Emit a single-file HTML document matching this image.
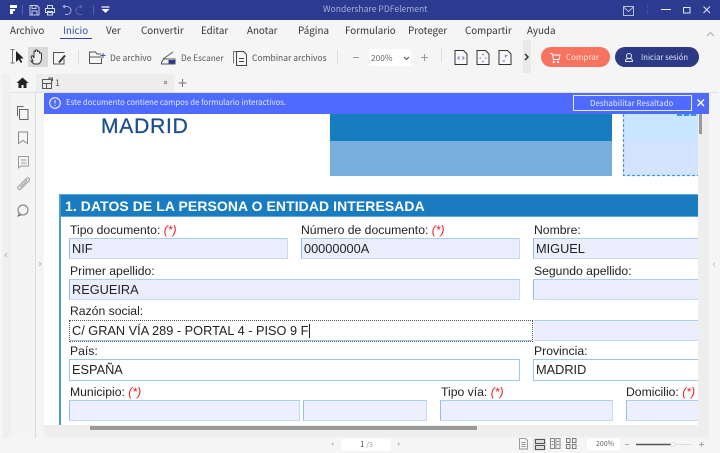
<!DOCTYPE html>
<html><head><meta charset="utf-8">
<style>
html,body{margin:0;padding:0;width:720px;height:453px;overflow:hidden;background:#f5f5f5}
#r{position:relative;width:720px;height:453px;overflow:hidden;font-family:"Noto Sans CJK SC","Liberation Sans",sans-serif}
#r div,#r span.a,#r svg{position:absolute}
.t{white-space:nowrap;line-height:1;color:#333}
.m{font-size:9.8px;top:25.5px;color:#333}
.tb{font-size:8.5px;color:#555;top:54px}
.l{font-family:"Liberation Sans",sans-serif;font-size:12.2px;color:#222;white-space:nowrap;line-height:1}
.l i{color:#f01c24}
.f{box-sizing:border-box;background:#ebedfd;border:1px solid #c5dcf3;border-left-color:#8fc0e6;border-top-color:#a9cfee;font-family:"Liberation Sans",sans-serif;font-size:12.75px;color:#222;white-space:nowrap;line-height:19px;padding-left:2px}
.w{background:#fff;border-color:#9cc8ea}
svg{overflow:visible}
</style></head><body><div id="r">

<!-- title bar -->
<div style="left:0;top:0;width:720px;height:20px;background:#2c3a90"></div>
<svg style="left:0;top:0" width="720" height="20" fill="none" stroke="#dfe2f2" stroke-width="1">
<path d="M10 5h7v3h-7zM10 9h5v2h-2v3h-3z" fill="#fff" stroke="none"/>
<path d="M22.500 5v10" stroke="#5560a8"/>
<path d="M30 5.500h7l2 2v7.500h-9zM32 5.500v3h4v-3M32 15v-4h5v4" stroke="#c8cce6"/>
<path d="M47.500 8.500v-3h5v3M45.500 8.500h9v4h-9zM47.500 11.500h5v3.500h-5z" stroke="#d5d8ec"/>
<path d="M63 6.500h4a3.800 3.800 0 0 1 0 8h-2M63 6.500l2-1.500M63 6.500l2 1.500" stroke="#aab0d6"/>
<path d="M82 6.500h-2a4 4 0 0 0 0 8h2M82 6.500l-2-1.500M82 6.500l-2 1.500" stroke="#5b66ac"/>
<path d="M93.500 5v10" stroke="#5560a8"/>
<path d="M101.500 7h8" stroke="#fff" stroke-width="1.200"/>
<path d="M101.500 9h8l-4 4z" fill="#fff" stroke="none"/>
<path d="M623.500 6.500h10v9h-10zM623.500 7l5 4.500 5-4.500" stroke="#b7bcdd"/>
<path d="M647.500 5v10" stroke="#5560a8" stroke-dasharray="1 1"/>
<path d="M661 9.500h10" stroke="#eef"/>
<path d="M683.500 7.500h6.500v5.500h-6.500z" stroke="#e4e6f4"/>
<path d="M703.500 6.500l6.500 6.500M710 6.500l-6.500 6.500" stroke="#e4e6f4"/>
</svg>
<div class="t" style="left:323px;top:5px;font-size:8.600px;color:#a9afd8">Wondershare PDFelement</div>

<!-- menu -->
<div class="t m" style="left:10px">Archivo</div>
<div class="t m" style="left:63px;color:#3a4da0">Inicio</div>
<div style="left:60px;top:38px;width:32px;height:1px;background:#3646a0"></div>
<div class="t m" style="left:106px">Ver</div>
<div class="t m" style="left:141px">Convertir</div>
<div class="t m" style="left:201px">Editar</div>
<div class="t m" style="left:247px">Anotar</div>
<div class="t m" style="left:298px">Página</div>
<div class="t m" style="left:345px">Formulario</div>
<div class="t m" style="left:408px">Proteger</div>
<div class="t m" style="left:465px">Compartir</div>
<div class="t m" style="left:527px">Ayuda</div>
<svg style="left:706px;top:31px" width="10" height="6" fill="none" stroke="#aaa"><path d="M1 5l3.500-3.500L8 5"/></svg>

<!-- toolbar -->
<div style="left:28px;top:47px;width:20px;height:20px;background:#d9d9d9"></div>
<svg style="left:0;top:40px" width="720" height="35" fill="none" stroke="#444" stroke-width="1">
<path d="M10.500 9.500h4M10.500 23h4M12.500 9.500v13.500" stroke="#777"/>
<path d="M16 11v11l2.800-2.500 2 3.500 1.500-1-2-3.300 3.300-.5z" fill="#222" stroke="none"/>
<path d="M33 21c-1-2-2.500-4-1.500-5s2 1 2.500 2v-6c0-1.500 1.500-1.500 1.500 0v-1c0-1.500 2-1.500 2 0v1c0-1.200 2-1.200 2 .5v1c.5-1 2-.8 2 .5v4c0 2.500-1 5-3 6h-4c-1 0-1.500-1-3.500-3z" stroke="#333" fill="#eee"/>
<path d="M64.500 12.500h-11v11.500h10.500v-5" stroke="#555"/>
<path d="M59 22.500l6-7" stroke="#333" stroke-width="2"/>
<path d="M78.500 10v13" stroke="#ddd"/>
<path d="M89.500 23.500v-11.500h6l1.500 2h4M101.500 18v5.500h-12M89.500 17h12" stroke="#555"/>
<path d="M103 13v5M100.500 15.500h5" stroke="#3a4da0"/>
<path d="M163 19l10-7M161.500 24v-1.500l2-3.500h11.500v5z" stroke="#555"/>
<path d="M168.500 20h7v3.500h-7z" fill="#2c3a90" stroke="none"/>
<path d="M236 11.500h-2.500v12" stroke="#777"/>
<path d="M236.500 11.500h7l3 3v11h-10zM239 18.500h5M239 21.500h5" stroke="#444"/>
<path d="M337.500 10v13" stroke="#ddd"/>
<path d="M353 17.500h6M421 17.500h7M424.500 14v7" stroke="#999"/>
<path d="M441.500 9v13" stroke="#ddd"/>
<g stroke="#333"><path d="M455 10.500h8.500l3.500 3.500v10.500h-12zM477 10.500h8.500l3.500 3.500v10.500h-12zM499 10.500h8.500l3.500 3.500v10.500h-12z" fill="#f7f7f7"/></g>
<g stroke="#7f8ac9" stroke-width="1.300"><path d="M459.500 16.500l-1.500 1.500 1.500 1.500M462.500 16.500l1.500 1.500-1.500 1.500M482 14.500h2M482 21.500h2M479.500 18h1.500M485 18h1.500M502.500 21h2.500M507.500 15.500h-2v2"/></g>
</svg>
<div class="t tb" style="left:110px">De archivo</div>
<div class="t tb" style="left:181px;font-size:8.300px">De Escaner</div>
<div class="t tb" style="left:252px">Combinar archivos</div>
<div style="left:369px;top:49px;width:42px;height:17px;background:#fff"></div>
<div class="t" style="left:371px;top:54px;font-size:8.300px;color:#666">200%</div>
<svg style="left:403px;top:56px" width="7" height="5" fill="none" stroke="#555"><path d="M1 1l2.500 2.500L6 1"/></svg>
<div style="left:523px;top:40px;width:8px;height:33px;background:#e9e9e9"></div>
<svg style="left:524px;top:53px" width="6" height="8" fill="none" stroke="#333" stroke-width="1.500"><path d="M1 1l3 3-3 3"/></svg>
<div style="left:541px;top:47px;width:69px;height:20px;border-radius:10px;background:#f8735f"></div>
<svg style="left:550px;top:50px" width="14" height="14" fill="none" stroke="#fff"><path d="M0 3.500h2l1.500 6h5.500l1-4.500h-7"/><circle cx="3.700" cy="12" r=".6"/><circle cx="8" cy="12" r=".6"/></svg>
<div class="t" style="left:566px;top:54px;font-size:8px;color:#ffe9e5">Comprar</div>
<div style="left:615px;top:47px;width:84px;height:20px;border-radius:10px;background:#2c3a85"></div>
<svg style="left:624px;top:50px" width="14" height="14" fill="none" stroke="#e6e8f5"><circle cx="5" cy="6" r="2.500"/><path d="M1.500 11.500c0-2.500 1-3 3.500-3s3.500.5 3.500 3z"/></svg>
<div class="t" style="left:641px;top:54px;font-size:7.700px;color:#dfe2f2">Iniciar sesión</div>

<!-- tab row -->
<div style="left:36px;top:74px;width:138px;height:18px;background:#ededed;border-radius:2px 2px 0 0"></div>
<svg style="left:0;top:70px" width="200" height="24" fill="none" stroke="#666">
<path d="M22.500 7.500l-6 5.500h2v5h3v-3h2v3h3v-5h2z" fill="#222" stroke="none"/>
<path d="M42.500 9.500h9v9h-9zM42.500 13.500h9M46.500 13.500v5M49 9v-1h3.500v3" stroke="#555"/>
<path d="M164 11l3 3M167 11l-3 3" stroke="#888"/>
<path d="M182.500 9v8M178.500 13h8" stroke="#777"/>
</svg>
<div class="t" style="left:55px;top:78px;font-size:9px;color:#555">1</div>

<!-- sidebar -->
<div style="left:0;top:93px;width:2px;height:345px;background:#f7f7f7"></div>
<div style="left:2px;top:74px;width:9px;height:364px;background:#f0f0f0"></div>
<div style="left:11px;top:92px;width:24px;height:346px;background:#f4f4f4"></div>
<div style="left:11px;top:92px;width:25px;height:1px;background:#e4e4e4"></div>
<div style="left:35px;top:92px;width:1px;height:346px;background:#dcdcdc"></div>
<div style="left:36px;top:92px;width:8px;height:346px;background:#f5f5f5"></div>
<svg style="left:0;top:93px" width="44" height="345" fill="none" stroke="#777" stroke-width="1">
<path d="M17.500 23v-9.500h6M20 16.500h8v10h-8.500" stroke="#666"/><path d="M19.500 16v10.500" stroke="#666"/>
<path d="M18.500 39h9v11.500l-4.500-3-4.500 3z" stroke="#888"/>
<path d="M18.500 63.500h10v9.500h-7.500l-2.500 2zM21 67h5.500M21 70h5.500" stroke="#999"/>
<path d="M19 93l7.500-7.500c2-2 4 .5 2.300 2.500l-8 8c-2 1.800-4-.5-2.300-2.500l6.500-6.500c1-1 2.200.2 1.300 1.300l-6 6" stroke="#999"/>
<circle cx="23" cy="117" r="5" stroke="#777"/><path d="M19.500 120.500l-1.500 2.500 3-1"/>
<path d="M7 160l-2 2 2 2" stroke="#bbb"/>
<path d="M39 169l2 2-2 2" stroke="#bbb"/>
</svg>

<!-- document -->
<div style="left:44px;top:114px;width:654px;height:311px;background:#fff"></div>
<div class="t" style="left:101px;top:116px;font-family:'Liberation Sans',sans-serif;font-size:21px;color:#1c4e8d;letter-spacing:.8px;-webkit-text-stroke:.3px #1c4e8d">MADRID</div>
<div style="left:330px;top:114px;width:282px;height:27px;background:#177dc0"></div>
<div style="left:330px;top:141px;width:282px;height:35px;background:#79afdf"></div>
<div style="left:623px;top:114px;width:75px;height:27px;background:#c8e6ff"></div>
<div style="left:623px;top:141px;width:75px;height:35px;background:#d2e4fd"></div>
<svg style="left:623px;top:114px" width="75" height="63" fill="none" stroke="#4e97d0" stroke-width="1.200" stroke-dasharray="3 2"><path d="M.5 0v61.500h75"/></svg>
<div style="left:677px;top:114px;width:21px;height:2px;background:repeating-linear-gradient(90deg,#3d94d8 0 5px,#a8d4f5 5px 7px)"></div>

<div style="left:59px;top:194px;width:639px;height:23px;box-sizing:border-box;background:#197cc0;border-top:1px solid #62a7d6;border-bottom:1px solid #62a7d6"></div>
<div style="left:59px;top:194px;width:2px;height:231px;background:#4b9ad0"></div>
<div class="t" style="left:65px;top:200px;font-family:'Liberation Sans',sans-serif;font-weight:bold;font-size:13.950px;color:#fff;letter-spacing:.1px">1. DATOS DE LA PERSONA O ENTIDAD INTERESADA</div>

<div class="l" style="left:70px;top:224px">Tipo documento: <i>(*)</i></div>
<div class="l" style="left:301px;top:224px">Número de documento: <i>(*)</i></div>
<div class="l" style="left:534px;top:224px">Nombre:</div>
<div class="f" style="left:69px;top:238px;width:219px;height:21px">NIF</div>
<div class="f" style="left:301px;top:238px;width:219px;height:21px">00000000A</div>
<div class="f" style="left:533px;top:238px;width:165px;height:21px;border-right:0">MIGUEL</div>

<div class="l" style="left:70px;top:265px">Primer apellido:</div>
<div class="l" style="left:534px;top:265px">Segundo apellido:</div>
<div class="f" style="left:69px;top:279px;width:451px;height:21px">REGUEIRA</div>
<div class="f" style="left:533px;top:279px;width:165px;height:21px;border-right:0"></div>

<div class="l" style="left:70px;top:305px">Razón social:</div>
<div class="f w" style="left:69px;top:320px;width:464px;height:22px;border:1px dotted #555;line-height:20px">C/ GRAN VÍA 289 - PORTAL 4 - PISO 9 F</div>
<div style="left:70px;top:340px;width:462px;height:1px;background:#9cc8ea"></div>
<div style="left:309px;top:324px;width:1px;height:14px;background:#222"></div>
<div class="f" style="left:534px;top:320px;width:164px;height:21px;border-right:0;border-left:0"></div>

<div class="l" style="left:70px;top:345px">País:</div>
<div class="l" style="left:534px;top:345px">Provincia:</div>
<div class="f w" style="left:69px;top:359px;width:451px;height:22px;line-height:20px">ESPAÑA</div>
<div class="f w" style="left:533px;top:359px;width:165px;height:22px;border-right:0;line-height:20px">MADRID</div>

<div class="l" style="left:70px;top:386px">Municipio: <i>(*)</i></div>
<div class="l" style="left:441px;top:386px">Tipo vía: <i>(*)</i></div>
<div class="l" style="left:626px;top:386px">Domicilio: <i>(*)</i></div>
<div class="f" style="left:69px;top:400px;width:231px;height:21px;background:#ecf0fe"></div>
<div class="f" style="left:303px;top:400px;width:124px;height:21px;background:#ecf0fe"></div>
<div class="f" style="left:440px;top:400px;width:173px;height:21px;background:#ecf0fe"></div>
<div class="f" style="left:626px;top:400px;width:72px;height:21px;background:#ecf0fe;border-right:0"></div>

<!-- scrollbars -->
<div style="left:698px;top:114px;width:11px;height:311px;background:#eee"></div>
<div style="left:699px;top:114px;width:3px;height:20px;background:#999"></div>
<div style="left:44px;top:425px;width:665px;height:12px;background:#eee"></div>
<div style="left:90px;top:426px;width:387px;height:4px;background:#999"></div>
<svg style="left:709px;top:259px" width="11" height="14" fill="none" stroke="#ccc"><path d="M6 3.500l-2 2 2 2"/></svg>

<!-- banner -->
<div style="left:36px;top:92px;width:682px;height:1px;background:#dfe1ec"></div>
<div style="left:44px;top:93px;width:665px;height:21px;background:#4f6bff"></div>
<svg style="left:48px;top:96px" width="14" height="14" fill="none" stroke="#fff"><circle cx="7" cy="7" r="5.300"/><path d="M7 4v3.500M7 9v1"/></svg>
<div class="t" style="left:66px;top:99px;font-size:7.780px;color:#e3e7ff">Este documento contiene campos de formulario interactivos.</div>
<div style="left:573px;top:95px;width:119px;height:16px;box-sizing:border-box;border:1px solid #e6e9ff"></div>
<div class="t" style="left:590px;top:100px;font-size:7.950px;color:#e3e7ff">Deshabilitar Resaltado</div>
<svg style="left:697px;top:99px" width="9" height="9" fill="none" stroke="#fff" stroke-width="1.400"><path d="M.5 .5l6.500 6.500M7 .5L.5 7"/></svg>

<!-- status bar -->
<svg style="left:0;top:437px" width="720" height="16" fill="none" stroke="#888">
<path d="M333.500 5.500l-1.500 1.500 1.500 1.500M398 5.500l1.500 1.500-1.500 1.500" stroke="#bbb"/>
<path d="M519.500 1.500h6l2 2v8.500h-8zM521.500 5.500h4M521.500 7.500h4M521.500 9.500h4" stroke="#999"/>
<path d="M533 1h13v12.500h-13z" fill="#dedede" stroke="none"/>
<path d="M535.500 2.500h9v4h-9zM535.500 8.500h9v4h-9z" stroke="#555"/>
<path d="M550.500 1.500h4v10h-4zM556 1.500h4v10h-4zM551.500 4.500h2M551.500 7.500h2M557 4.500h2M557 7.500h2" stroke="#888"/>
<path d="M566.500 1.500h3.500v4h-3.500zM572.500 1.500h3.500v4h-3.500zM566.500 7.500h3.500v4h-3.500zM572.500 7.500h3.500v4h-3.500z" stroke="#777"/>
<path d="M625 7.500h4M699 7.500h5M701.500 5v5" stroke="#aaa"/>
<path d="M636 7.500h55" stroke="#ddd"/>
<path d="M636 7.500h36" stroke="#555" stroke-width="1.500"/>
<circle cx="673" cy="7.500" r="2" fill="#fff" stroke="#ddd"/>
</svg>
<div style="left:341px;top:439px;width:50px;height:12px;background:#fff;border-radius:2px"></div>
<div class="t" style="left:360px;top:441px;font-size:8px;color:#555">1 <span style="color:#999;font-size:7px">/3</span></div>
<div style="left:587px;top:439px;width:33px;height:11px;background:#fff"></div>
<div class="t" style="left:596px;top:441px;font-size:7px;color:#666">200%</div>

</div></body></html>
